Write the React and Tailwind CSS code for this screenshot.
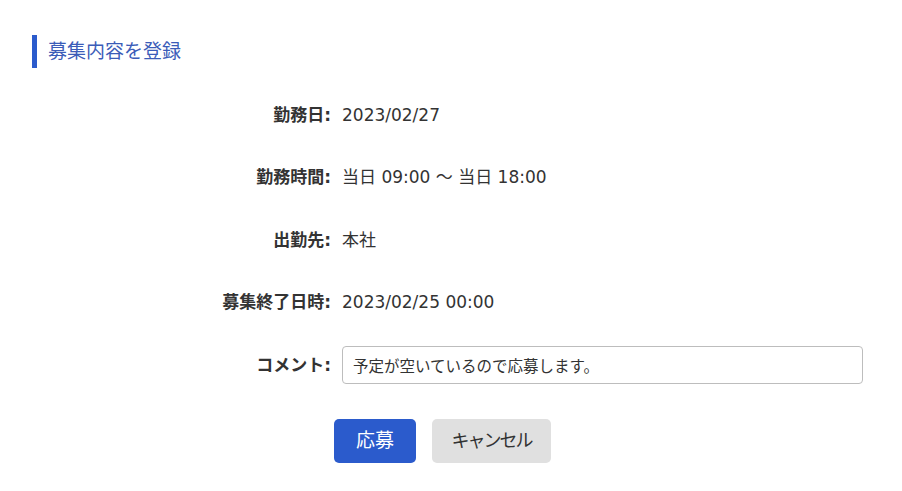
const rows = [
  { label: '勤務日:', value: '2023/02/27' },
  { label: '勤務時間:', value: '当日 09:00 〜 当日 18:00' },
  { label: '出勤先:', value: '本社' },
  { label: '募集終了日時:', value: '2023/02/25 00:00' },
];

export default function App() {
  return (
    <div className="min-h-[491px] bg-white pl-[32px] pt-[35px] text-[#333] font-['DejaVu_Sans','Noto_Sans_CJK_JP',sans-serif]">
      <h2 className="flex h-[33px] items-center border-l-[5px] border-[#2b5bcc] pl-[11px] text-[19px] text-[#3b5cb8]">
        募集内容を登録
      </h2>

      <div className="mt-[16px]">
        {rows.map((r) => (
          <div key={r.label} className="flex h-[62.5px] items-center">
            <div className="w-[299px] text-right text-[17px] font-bold">{r.label}</div>
            <div className="ml-[11px] text-[17px]">{r.value}</div>
          </div>
        ))}
        <div className="flex h-[62.5px] items-center">
          <div className="w-[299px] text-right text-[17px] font-bold">コメント:</div>
          <input
            type="text"
            defaultValue="予定が空いているので応募します。"
            className="ml-[11px] h-[38px] w-[521px] rounded-[4px] border border-[#bdbdbd] px-[10px] text-[15.5px] text-[#333] outline-none"
          />
        </div>
      </div>

      <div className="ml-[302px] mt-[22px] flex gap-[16px]">
        <button className="h-[44px] w-[82px] rounded-[5px] bg-[#2b5bcc] text-[19px] text-white">応募</button>
        <button className="h-[44px] w-[119px] rounded-[5px] bg-[#e0e0e0] text-[18px] tracking-[-2px] text-[#333]">キャンセル</button>
      </div>
    </div>
  );
}
